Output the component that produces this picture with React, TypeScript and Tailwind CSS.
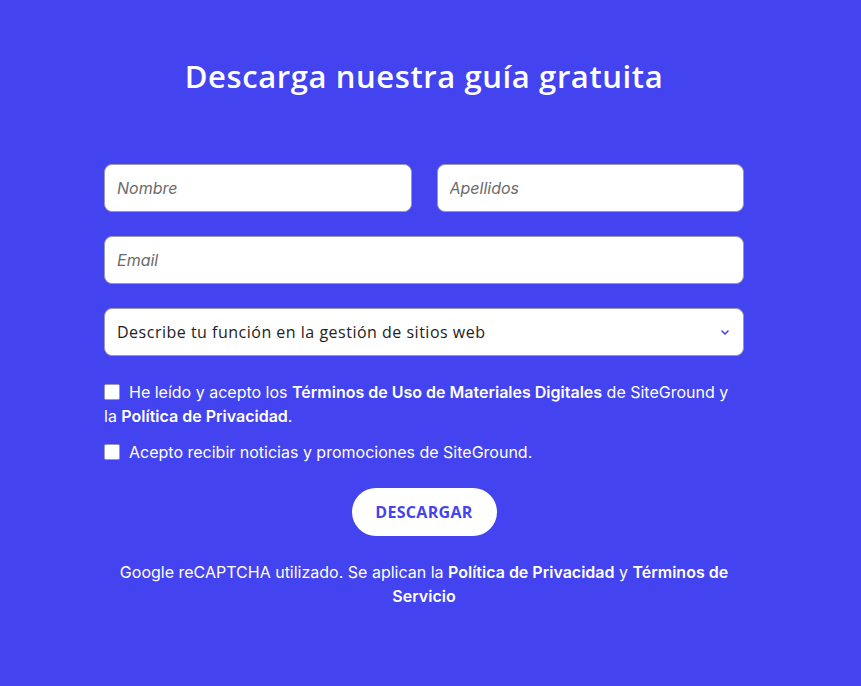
import React from 'react';

const sans = { fontFamily: 'Inter, "Noto Sans", sans-serif' };
const geo = { fontFamily: '"Open Sans", Inter, sans-serif' };

export default function App() {
  return (
    <div className="min-h-screen w-full bg-[#4343f0] text-white" style={sans}>
      <div className="w-[848px] pt-[56px] flex flex-col items-center">
        <h1 className="text-[31px] font-semibold leading-[40px] tracking-[0.6px]" style={geo}>
          Descarga nuestra guía gratuita
        </h1>

        <form className="w-[640px] mt-[68px] flex flex-col">
          <div className="grid grid-cols-2 gap-[25px]">
            <input
              placeholder="Nombre"
              className="h-[48px] rounded-lg border border-[#9a9ab8] bg-white px-3 text-base italic text-[#333] placeholder:text-[#6b6b6b] outline-none"
            />
            <input
              placeholder="Apellidos"
              className="h-[48px] rounded-lg border border-[#9a9ab8] bg-white px-3 text-base italic text-[#333] placeholder:text-[#6b6b6b] outline-none"
            />
          </div>
          <input
            placeholder="Email"
            className="mt-[24px] h-[48px] rounded-lg border border-[#9a9ab8] bg-white px-3 text-base italic text-[#333] placeholder:text-[#6b6b6b] outline-none"
          />
          <div className="mt-[24px] h-[48px] rounded-lg border border-[#9a9ab8] bg-white pl-3 pr-3 flex items-center justify-between">
            <span className="text-[16px] tracking-[0.5px] text-[#222]" style={geo}>
              Describe tu función en la gestión de sitios web
            </span>
            <svg width="10" height="7" viewBox="0 0 10 7" fill="none" className="mr-[1px]">
              <path d="M2 2l3 3 3-3" stroke="#4343f0" strokeWidth="1.6" strokeLinecap="round" strokeLinejoin="round" />
            </svg>
          </div>

          <p className="mt-[24px] text-base leading-[24px]">
            <span className="inline-block align-[-2px] mr-[9px] h-[16px] w-[16px] rounded-[2px] border border-[#9a9ab8] bg-white" />
            He leído y acepto los <b className="font-semibold">Términos de Uso de Materiales Digitales</b> de SiteGround y la{' '}
            <b className="font-semibold">Política de Privacidad</b>.
          </p>

          <p className="mt-[12px] text-base leading-[24px]">
            <span className="inline-block align-[-2px] mr-[9px] h-[16px] w-[16px] rounded-[2px] border border-[#9a9ab8] bg-white" />
            Acepto recibir noticias y promociones de SiteGround.
          </p>

          <div className="mt-[24px] flex justify-center">
            <button
              type="button"
              className="h-[48px] w-[145px] rounded-full bg-white text-[16px] font-bold tracking-[0.3px] text-[#4343f0]"
              style={geo}
            >
              DESCARGAR
            </button>
          </div>

          <p className="mt-[24px] text-center text-base leading-[24px] px-[8px]">
            Google reCAPTCHA utilizado. Se aplican la <b className="font-semibold">Política de Privacidad</b> y{' '}
            <b className="font-semibold">Términos de Servicio</b>
          </p>
        </form>
      </div>
    </div>
  );
}
